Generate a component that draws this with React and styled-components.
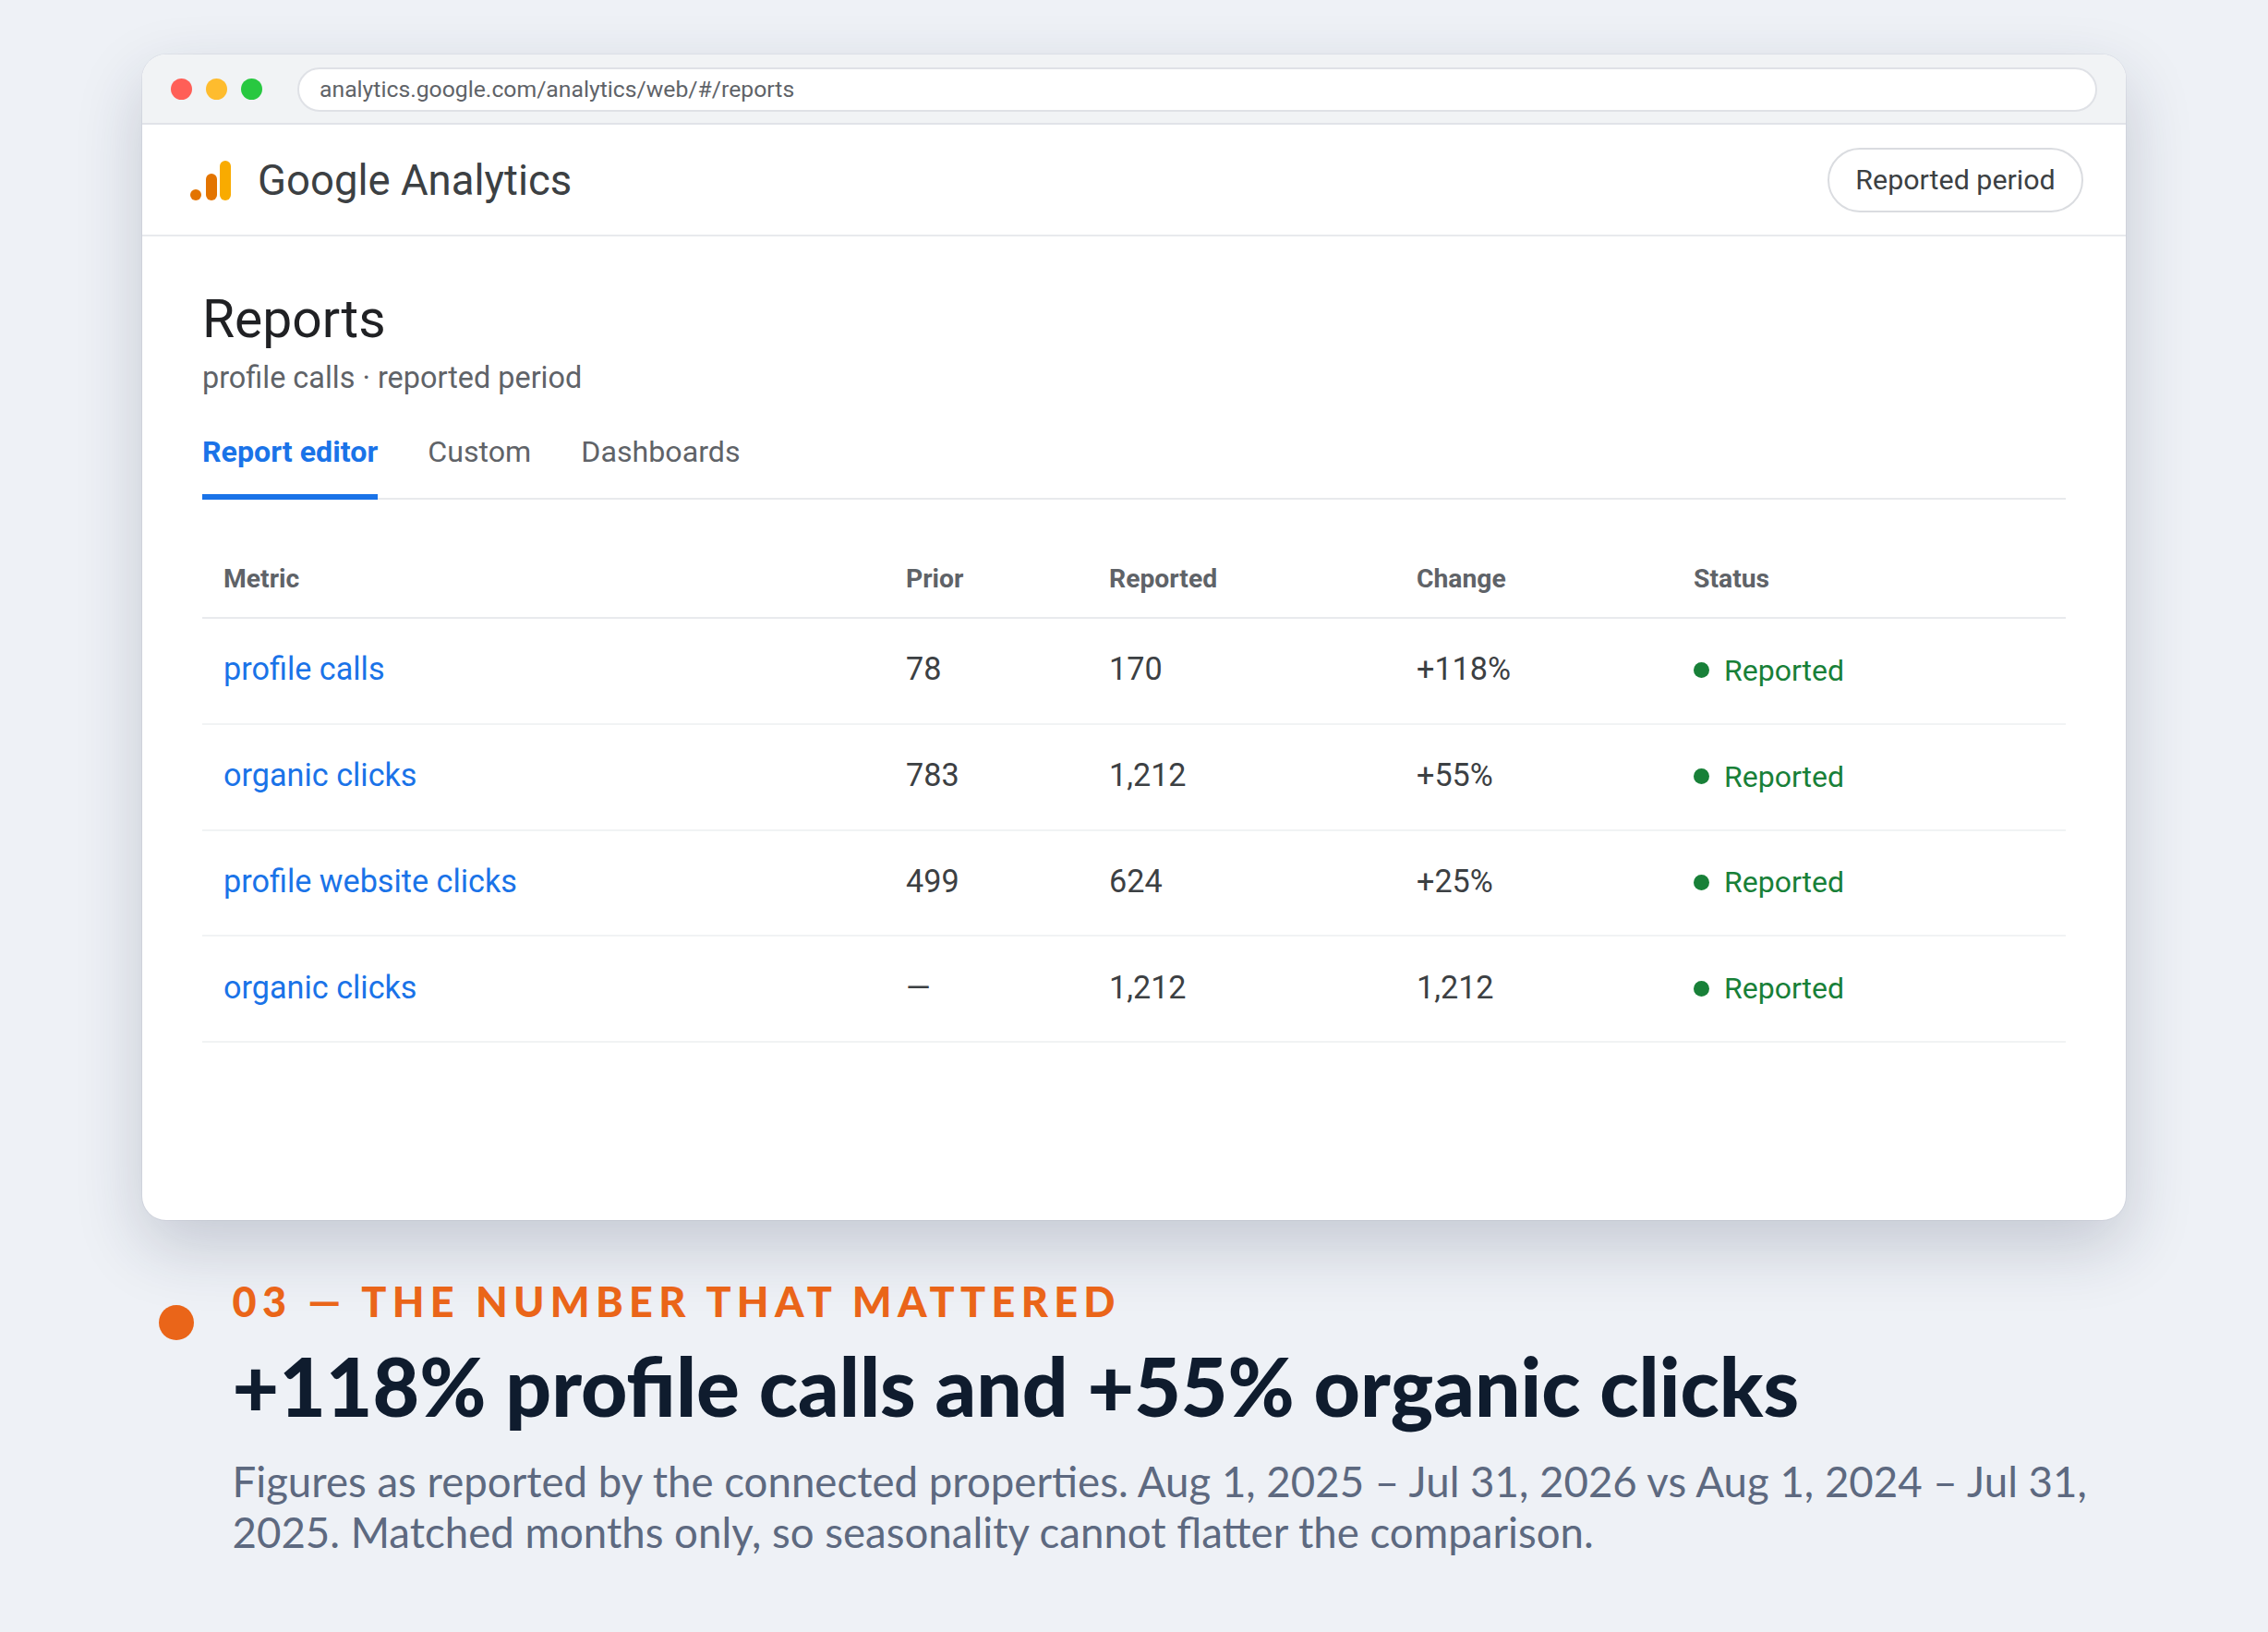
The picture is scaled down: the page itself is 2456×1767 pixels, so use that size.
import React from 'react';
import styled, { createGlobalStyle } from 'styled-components';

const GlobalStyle = createGlobalStyle`
  html, body {
    margin: 0;
    background: #eef1f6;
  }
  * {
    box-sizing: border-box;
  }
`;

const Page = styled.div`
  width: 2456px;
  height: 1767px;
  padding: 59px 154px 0;
  background: #eef1f6;
  overflow: hidden;
`;

const BrowserCard = styled.div`
  height: 1262px;
  background: #fff;
  border-radius: 26px;
  overflow: hidden;
  box-shadow: 0 0 0 1px rgba(30, 42, 70, 0.05), 0 28px 72px rgba(30, 42, 70, 0.2);
  font-family: Roboto, sans-serif;
`;

const ChromeBar = styled.div`
  height: 76px;
  display: flex;
  align-items: center;
  gap: 38px;
  padding: 1px 31px 0 31px;
  background: #f1f3f5;
  border-bottom: 2px solid #e1e3e8;
`;

const TrafficLights = styled.div`
  display: flex;
  gap: 15px;
`;

const Light = styled.span`
  width: 23px;
  height: 23px;
  border-radius: 50%;
  background: ${(props) => props.color};
`;

const AddressBar = styled.div`
  flex: 1;
  height: 48px;
  display: flex;
  align-items: center;
  padding-left: 22px;
  background: #fff;
  border: 2px solid #dfe1e6;
  border-radius: 24px;
  color: #5f6368;
  font-size: 24.75px;
`;

const AppHeader = styled.div`
  height: 121px;
  display: flex;
  align-items: center;
  justify-content: space-between;
  padding: 0 46px 0 52px;
  border-bottom: 2px solid #e8eaed;
`;

const Brand = styled.div`
  display: flex;
  align-items: center;
  gap: 29px;
  padding-top: 2px;
`;

const BrandName = styled.div`
  color: #3c4043;
  font-size: 45.5px;
`;

const PeriodButton = styled.button`
  width: 277px;
  height: 70px;
  padding: 0;
  background: #fff;
  border: 2px solid #dadce0;
  border-radius: 35px;
  color: #3c4043;
  font-family: inherit;
  font-size: 30.4px;
`;

const ReportBody = styled.div`
  padding: 57px 65px 0 65px;
`;

const Heading = styled.h1`
  margin: 0;
  color: #202124;
  font-size: 57px;
  font-weight: 400;
  line-height: 66px;
`;

const SubHeading = styled.div`
  margin-top: 9px;
  color: #5f6368;
  font-size: 32.4px;
  line-height: 42px;
`;

const Tabs = styled.div`
  display: flex;
  gap: 54px;
  margin-top: 29px;
  border-bottom: 2px solid #e8eaed;
`;

const Tab = styled.div`
  height: 82px;
  margin-bottom: -2px;
  padding-top: 8px;
  border-bottom: 6px solid ${(props) => (props.$active ? '#1a73e8' : 'transparent')};
  color: ${(props) => (props.$active ? '#1a73e8' : '#5f6368')};
  font-size: 32.2px;
  font-weight: ${(props) => (props.$active ? 700 : 400)};
  line-height: 44px;
`;

const Table = styled.div`
  margin-top: 41px;
`;

const TableRow = styled.div`
  display: grid;
  grid-template-columns: 739px 220px 333px 300px 425px;
  align-items: center;
  height: ${(props) => (props.$head ? '88px' : '114.75px')};
  border-bottom: 2px solid ${(props) => (props.$head ? '#e8eaed' : '#f1f3f4')};
`;

const HeadCell = styled.div`
  padding: 3px 0 0 23px;
  color: #5f6368;
  font-size: 28.3px;
  font-weight: 700;
`;

const Cell = styled.div`
  padding: 0 0 4px 23px;
  color: #3c4043;
  font-size: 34.2px;
`;

const MetricLink = styled.a`
  color: #1a73e8;
  text-decoration: none;
`;

const StatusCell = styled(Cell)`
  display: flex;
  align-items: center;
  gap: 16px;
  padding-bottom: 1px;
  color: #188038;
  font-size: 32px;
`;

const StatusDot = styled.span`
  width: 17px;
  height: 17px;
  border-radius: 50%;
  background: #188038;
`;

const Caption = styled.div`
  display: flex;
  align-items: flex-start;
  gap: 41.5px;
  margin-top: 65px;
  padding-left: 18px;
  font-family: Lato, sans-serif;
`;

const CaptionDot = styled.span`
  flex: none;
  width: 38px;
  height: 38px;
  margin-top: 27px;
  border-radius: 50%;
  background: #ea6519;
`;

const CaptionText = styled.div`
  flex: 1;
`;

const Eyebrow = styled.div`
  color: #ea6519;
  font-size: 45px;
  font-weight: 900;
  letter-spacing: 6.3px;
  line-height: 46px;
`;

const Headline = styled.h2`
  margin: 17px 0 0;
  color: #0f1c2e;
  font-size: 87.4px;
  font-weight: 900;
  line-height: 104px;
`;

const Blurb = styled.p`
  margin: 23px 0 0;
  color: #5d6980;
  font-size: 45.6px;
  line-height: 55px;
`;

const rows = [
  { metric: 'profile calls', prior: '78', reported: '170', change: '+118%' },
  { metric: 'organic clicks', prior: '783', reported: '1,212', change: '+55%' },
  { metric: 'profile website clicks', prior: '499', reported: '624', change: '+25%' },
  { metric: 'organic clicks', prior: '—', reported: '1,212', change: '1,212' },
];

const AnalyticsLogo = () => (
  <svg width="44" height="43" viewBox="0 0 44 43" aria-hidden="true">
    <circle cx="6" cy="37" r="6" fill="#e37400" />
    <rect x="17" y="14" width="12" height="29" rx="6" fill="#e37400" />
    <rect x="32" y="0" width="12" height="43" rx="6" fill="#f9ab00" />
  </svg>
);

export default function App() {
  return (
    <Page>
      <GlobalStyle />
      <BrowserCard>
        <ChromeBar>
          <TrafficLights>
            <Light color="#ff5f57" />
            <Light color="#febc2e" />
            <Light color="#28c840" />
          </TrafficLights>
          <AddressBar>analytics.google.com/analytics/web/#/reports</AddressBar>
        </ChromeBar>
        <AppHeader>
          <Brand>
            <AnalyticsLogo />
            <BrandName>Google Analytics</BrandName>
          </Brand>
          <PeriodButton>Reported period</PeriodButton>
        </AppHeader>
        <ReportBody>
          <Heading>Reports</Heading>
          <SubHeading>profile calls · reported period</SubHeading>
          <Tabs>
            <Tab $active>Report editor</Tab>
            <Tab>Custom</Tab>
            <Tab>Dashboards</Tab>
          </Tabs>
          <Table>
            <TableRow $head>
              <HeadCell>Metric</HeadCell>
              <HeadCell>Prior</HeadCell>
              <HeadCell>Reported</HeadCell>
              <HeadCell>Change</HeadCell>
              <HeadCell>Status</HeadCell>
            </TableRow>
            {rows.map((row, i) => (
              <TableRow key={i}>
                <Cell><MetricLink>{row.metric}</MetricLink></Cell>
                <Cell>{row.prior}</Cell>
                <Cell>{row.reported}</Cell>
                <Cell>{row.change}</Cell>
                <StatusCell><StatusDot />Reported</StatusCell>
              </TableRow>
            ))}
          </Table>
        </ReportBody>
      </BrowserCard>
      <Caption>
        <CaptionDot />
        <CaptionText>
          <Eyebrow>03 — THE NUMBER THAT MATTERED</Eyebrow>
          <Headline>+118% profile calls and +55% organic clicks</Headline>
          <Blurb>
            Figures as reported by the connected properties. Aug 1, 2025 – Jul 31, 2026 vs Aug 1, 2024 – Jul 31, 2025. Matched months only, so seasonality cannot flatter the comparison.
          </Blurb>
        </CaptionText>
      </Caption>
    </Page>
  );
}
